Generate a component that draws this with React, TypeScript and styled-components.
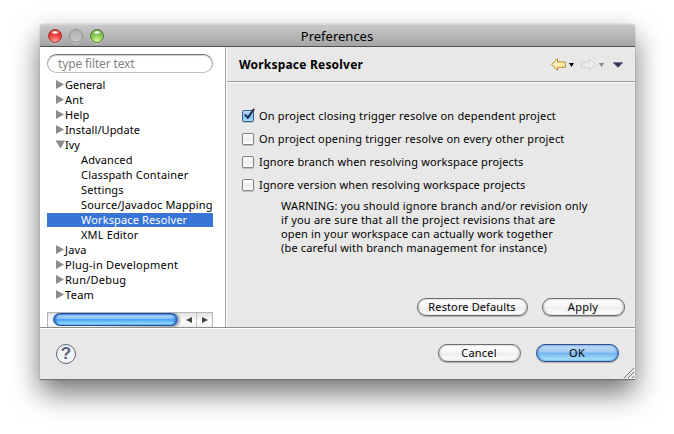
import React from "react";
import styled, { createGlobalStyle, css } from "styled-components";

const GlobalStyle = createGlobalStyle`
  * { box-sizing: border-box; }
  body {
    margin: 0;
    background: #fff;
    overflow: hidden;
    color: #000;
    font: 11px/15px "Noto Sans", "Open Sans", sans-serif;
  }
`;

const Desktop = styled.main`
  width: 674px;
  height: 434px;
  padding: 24px 0 0 40px;
`;

const Window = styled.section`
  width: 595px;
  height: 356px;
  display: flex;
  flex-direction: column;
  border-radius: 4px 4px 0 0;
  background: #e8e8e8;
  box-shadow: 0 13px 28px rgba(0, 0, 0, 0.55), 0 0 1px rgba(0, 0, 0, 0.6);
`;

const TitleBar = styled.header`
  height: 23px;
  flex: none;
  display: grid;
  grid-template-columns: 1fr auto 1fr;
  align-items: center;
  padding: 1px 9px 0 8px;
  border-radius: 4px 4px 0 0;
  border-top: 1px solid #d6d6d6;
  border-bottom: 1px solid #505050;
  background: linear-gradient(#c9c9c9, #a4a4a4);
  font-size: 13px;
`;

const Lights = styled.div`
  display: flex;
  gap: 7px;
`;

const Light = styled.span<{ $tone: "red" | "gray" | "green" }>`
  width: 14px;
  height: 14px;
  border-radius: 50%;
  box-shadow: 0 1px 0 rgba(255, 255, 255, 0.35);
  ${({ $tone }) =>
    $tone === "gray"
      ? css`
          border: 1px solid #929292;
          background: linear-gradient(#b0b0b0, #c8c8c8);
        `
      : $tone === "red"
      ? css`
          border: 1px solid #a03634;
          background: radial-gradient(ellipse 4px 2px at 50% 20%, #fff 30%, transparent),
            radial-gradient(circle at 50% 95%, #ffaaa0, #f0443c 50%, #c92626);
        `
      : css`
          border: 1px solid #54803a;
          background: radial-gradient(ellipse 4px 2px at 50% 20%, #fff 30%, transparent),
            radial-gradient(circle at 50% 95%, #d8ff9c, #8bc850 50%, #5b9a34);
        `}
`;

const Text = styled.span<{ $track: number }>`
  letter-spacing: ${({ $track }) => $track}px;
  white-space: pre;
`;

const Body = styled.div`
  flex: 1;
  display: flex;
  min-height: 0;
  border-bottom: 1px solid #8e8e8e;
`;

const Sidebar = styled.aside`
  width: 186px;
  flex: none;
  display: flex;
  flex-direction: column;
  padding: 7px 12px 0 7px;
  background: #fff;
  border-right: 1px solid #a0a0a0;
`;

const Search = styled.div`
  height: 19px;
  flex: none;
  display: flex;
  align-items: center;
  padding: 0 0 1px 10px;
  border: 1px solid #a5a5a5;
  border-top-color: #777;
  border-bottom-color: #c4c4c4;
  border-radius: 10px;
  box-shadow: inset 0 1px 1px #d0d0d0;
  color: #838383;
  font-size: 12px;
`;

const Tree = styled.ul`
  flex: 1;
  margin: 4px 0 0;
  padding: 0;
  list-style: none;
`;

const TreeRow = styled.li<{ $child: boolean; $selected: boolean }>`
  height: 15px;
  display: flex;
  align-items: center;
  padding-left: ${({ $child }) => ($child ? 34 : 9)}px;
  background: ${({ $selected }) =>
    $selected ? "linear-gradient(transparent 1px, #3875d7 1px)" : "transparent"};
  color: ${({ $selected }) => ($selected ? "#fff" : "#000")};
`;

const Disclosure = styled.svg`
  width: 9px;
  height: 9px;
  flex: none;
  fill: #8c8c8c;
`;

const ScrollBar = styled.div`
  height: 15px;
  flex: none;
  display: flex;
  border: 1px solid #b5b5b5;
  border-bottom: 0;
  background: linear-gradient(#e2e2e2, #fff 60%, #efefef);
`;

const Track = styled.div`
  width: 133px;
  padding-left: 5px;
  border-radius: 0 8px 8px 0;
  background: linear-gradient(90deg, transparent 30%, #a5adb5 95%, #d0d0d0);
`;

const Thumb = styled.div`
  width: 125px;
  height: 13px;
  border: 1px solid #1c4f9e;
  border-radius: 7px;
  background: linear-gradient(#5592dc, #afd8fb 18%, #81befa 42%, #4da4f5 50%, #67b9fd 68%, #a0eaff 92%);
  box-shadow: inset 2px 0 2px #2c74cc, inset -2px 0 2px #2c74cc;
`;

const Arrow = styled.div<{ $divided?: boolean }>`
  flex: ${({ $divided }) => ($divided ? "0 0 16px" : "1")};
  display: flex;
  align-items: center;
  justify-content: center;
  border-right: ${({ $divided }) => ($divided ? "1px solid #c0c0c0" : "0")};
`;

const Content = styled.section`
  flex: 1;
  display: flex;
  flex-direction: column;
  border-left: 1px solid #fff;
`;

const PageHeader = styled.div`
  height: 35px;
  flex: none;
  display: flex;
  align-items: center;
  justify-content: space-between;
  padding: 0 12px 0 12px;
  border-bottom: 1px solid #999;
  font-size: 12px;
  font-weight: 700;
`;

const Toolbar = styled.div`
  display: flex;
  align-items: center;
  padding-top: 1px;
`;

const Glyph = styled.svg<{ $gap?: number }>`
  display: block;
  margin-left: ${({ $gap = 0 }) => $gap}px;
`;

const Settings = styled.div`
  flex: 1;
  padding: 21px 0 0 15px;
  border-top: 1px solid #fff;
`;

const Option = styled.label`
  height: 23px;
  display: flex;
  align-items: center;
  gap: 5px;
`;

const Box = styled.span<{ $checked: boolean }>`
  width: 12px;
  height: 12px;
  border: 1px solid ${({ $checked }) => ($checked ? "#3d5f91" : "#858585")};
  border-radius: 2px;
  background: ${({ $checked }) =>
    $checked
      ? "linear-gradient(#c5dff8, #79b6f2 50%, #a8e2fd)"
      : "linear-gradient(#fff, #ededed 50%, #fff)"};
  box-shadow: 0 1px 1px #bbb;
`;

const Check = styled.svg`
  display: block;
  margin: -3px 0 0 0;
  overflow: visible;
`;

const Warning = styled.p`
  display: flex;
  flex-direction: column;
  margin: 3px 0 0 39px;
  line-height: 14px;
`;

const Actions = styled.div`
  display: flex;
  justify-content: flex-end;
  gap: 14px;
  padding: 0 10.5px 11px 0;
`;

const Footer = styled.footer`
  height: 52px;
  flex: none;
  display: flex;
  justify-content: space-between;
  border-top: 1px solid #fff;
  border-bottom: 1px solid #727272;
  padding: 15px 1px 0 16px;
`;

const FooterButtons = styled.div`
  display: flex;
  align-items: flex-start;
`;

const Button = styled.button<{ $width: number; $primary?: boolean; $gap?: number }>`
  width: ${({ $width }) => $width}px;
  height: 18px;
  margin: 0 0 0 ${({ $gap = 0 }) => $gap}px;
  padding: 0;
  border: 1px solid ${({ $primary }) => ($primary ? "#344f91" : "#6c6c6c")};
  border-radius: 9px;
  background: ${({ $primary }) =>
    $primary
      ? "linear-gradient(#c3dcf5, #9ecaf3 45%, #6fb2ef 50%, #b4ecff)"
      : "linear-gradient(#fff, #f7f7f7 45%, #ededed 50%, #fff)"};
  box-shadow: 0 1px 1px #aaa, inset 1px 0 2px ${({ $primary }) => ($primary ? "#538dd0" : "#c8c8c8")},
    inset -1px 0 2px ${({ $primary }) => ($primary ? "#538dd0" : "#c8c8c8")};
  color: #000;
  font: inherit;
  line-height: 14px;
`;

const Help = styled.div`
  width: 20px;
  height: 20px;
  display: flex;
  align-items: center;
  justify-content: center;
  border: 1px solid #58647b;
  border-radius: 50%;
  background: #f3f4f6;
  color: #56637d;
  font: bold 17px/18px "Liberation Sans", Arial, sans-serif;
`;

const Grip = styled.svg`
  align-self: flex-end;
  margin: 0 0 1px 5.5px;
`;

type Node = { label: string; track: number; state?: "open" | "closed"; selected?: boolean };

const nodes: Node[] = [
  { label: "General", track: -0.04, state: "closed" },
  { label: "Ant", track: 0.2, state: "closed" },
  { label: "Help", track: 0.1, state: "closed" },
  { label: "Install/Update", track: 0.11, state: "closed" },
  { label: "Ivy", track: 0.02, state: "open" },
  { label: "Advanced", track: 0.12 },
  { label: "Classpath Container", track: 0.18 },
  { label: "Settings", track: 0.09 },
  { label: "Source/Javadoc Mapping", track: 0.17 },
  { label: "Workspace Resolver", track: 0.14, selected: true },
  { label: "XML Editor", track: 0.15 },
  { label: "Java", track: 0.15, state: "closed" },
  { label: "Plug-in Development", track: 0.25, state: "closed" },
  { label: "Run/Debug", track: 0.25, state: "closed" },
  { label: "Team", track: 0.3, state: "closed" },
];

const options = [
  { label: "On project closing trigger resolve on dependent project", track: 0.19, checked: true },
  { label: "On project opening trigger resolve on every other project", track: 0.177, checked: false },
  { label: "Ignore branch when resolving workspace projects", track: 0.153, checked: false },
  { label: "Ignore version when resolving workspace projects", track: 0.155, checked: false },
];

const warning = [
  { label: "WARNING: you should ignore branch and/or revision only", track: 0.192 },
  { label: "if you are sure that all the project revisions that are", track: 0.218 },
  { label: "open in your workspace can actually work together", track: 0.167 },
  { label: "(be careful with branch management for instance)", track: 0.158 },
];

export default function App() {
  return (
    <Desktop>
      <GlobalStyle />
      <Window>
        <TitleBar>
          <Lights>
            <Light $tone="red" />
            <Light $tone="gray" />
            <Light $tone="green" />
          </Lights>
          <Text $track={0.0}>Preferences</Text>
        </TitleBar>
        <Body>
          <Sidebar>
            <Search>
              <Text $track={-0.14}>type filter text</Text>
            </Search>
            <Tree>
              {nodes.map((n) => (
                <TreeRow key={n.label} $child={!n.state} $selected={!!n.selected}>
                  {n.state && (
                    <Disclosure viewBox="0 0 9 9">
                      <path d={n.state === "closed" ? "M0 0 8 4.5 0 9z" : "M-.5 .5H9L4.5 8.5z"} />
                    </Disclosure>
                  )}
                  <Text $track={n.track}>{n.label}</Text>
                </TreeRow>
              ))}
            </Tree>
            <ScrollBar>
              <Track>
                <Thumb />
              </Track>
              <Arrow $divided>
                <svg width="6" height="6" fill="#444"><path d="M6 0V6L0 3z" /></svg>
              </Arrow>
              <Arrow>
                <svg width="6" height="6" fill="#444"><path d="M0 0V6L6 3z" /></svg>
              </Arrow>
            </ScrollBar>
          </Sidebar>
          <Content>
            <PageHeader>
              <Text $track={0.2}>Workspace Resolver</Text>
              <Toolbar>
                <Glyph width="15" height="13">
                  <path d="M.7 6.5 6.5.7V4h7.8v5.3H6.5v3z" fill="#fff0b0" stroke="#b8862c" />
                </Glyph>
                <Glyph $gap={3} width="5" height="4"><path d="M0 0H5L2.5 4z" /></Glyph>
                <Glyph $gap={7} width="15" height="13">
                  <path d="M14.3 6.5 8.5.7V4H.7v5.3h7.8v3z" fill="#ececec" stroke="#cfcfcf" />
                </Glyph>
                <Glyph $gap={3} width="5" height="4"><path d="M0 0H5L2.5 4z" fill="#858585" /></Glyph>
                <Glyph $gap={9} width="10" height="6"><path d="M0 .5H10L5 5.5z" fill="#34345e" stroke="#5b5b78" strokeWidth=".4" /></Glyph>
              </Toolbar>
            </PageHeader>
            <Settings>
              {options.map((o) => (
                <Option key={o.label}>
                  <Box $checked={o.checked}>
                    {o.checked && (
                      <Check width="12" height="12">
                        <path d="M2 6.5 4.8 9.8 11.2.8" fill="none" stroke="#16213a" strokeWidth="1.8" />
                      </Check>
                    )}
                  </Box>
                  <Text $track={o.track}>{o.label}</Text>
                </Option>
              ))}
              <Warning>
                {warning.map((w) => (
                  <Text key={w.label} $track={w.track}>{w.label}</Text>
                ))}
              </Warning>
            </Settings>
            <Actions>
              <Button $width={111}><Text $track={0.12}>Restore Defaults</Text></Button>
              <Button $width={83}><Text $track={0.25}>Apply</Text></Button>
            </Actions>
          </Content>
        </Body>
        <Footer>
          <Help>?</Help>
          <FooterButtons>
            <Button $width={83}><Text $track={0.2}>Cancel</Text></Button>
            <Button $width={83} $gap={15} $primary><Text $track={0.2}>OK</Text></Button>
            <Grip width="10" height="10" stroke="#777" strokeWidth="1">
              <path d="M0 10 10 0M4 10 10 4M8 10 10 8" />
            </Grip>
          </FooterButtons>
        </Footer>
      </Window>
    </Desktop>
  );
}
